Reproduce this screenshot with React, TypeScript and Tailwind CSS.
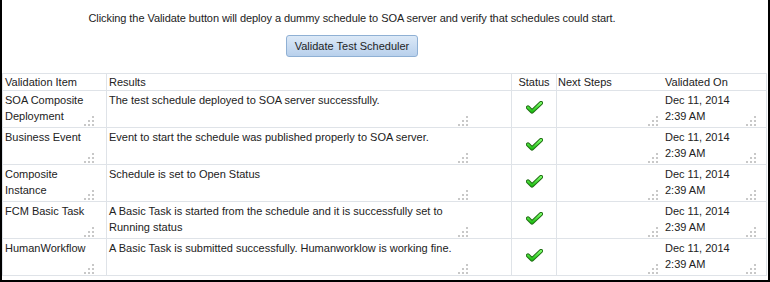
import React from "react";

const Check = () => (
  <svg width="17" height="13" viewBox="0 0 17 13">
    <defs>
      <linearGradient id="cg" x1="0" y1="0" x2="0" y2="1">
        <stop offset="0" stopColor="#7dff6a" />
        <stop offset="1" stopColor="#1fbf14" />
      </linearGradient>
    </defs>
    <path d="M2 6.5 L6 10.5 L15 2" fill="none" stroke="#1e6b12" strokeWidth="4.2" strokeLinecap="round" strokeLinejoin="round" />
    <path d="M2 6.5 L6 10.5 L15 2" fill="none" stroke="url(#cg)" strokeWidth="2.4" strokeLinecap="round" strokeLinejoin="round" />
  </svg>
);

const Grip = () => (
  <svg width="10" height="10" viewBox="0 0 10 10">
    <rect x="8" y="0" width="2" height="2" fill="#c8c8c8" />
    <rect x="4" y="4" width="2" height="2" fill="#c8c8c8" />
    <rect x="8" y="4" width="2" height="2" fill="#c8c8c8" />
    <rect x="0" y="8" width="2" height="2" fill="#c8c8c8" />
    <rect x="4" y="8" width="2" height="2" fill="#c8c8c8" />
    <rect x="8" y="8" width="2" height="2" fill="#c8c8c8" />
  </svg>
);

const rows = [
  { item: "SOA Composite Deployment", result: "The test schedule deployed to SOA server successfully." },
  { item: "Business Event", result: "Event to start the schedule was published properly to SOA server." },
  { item: "Composite Instance", result: "Schedule is set to Open Status" },
  { item: "FCM Basic Task", result: "A Basic Task is started from the schedule and it is successfully set to Running status" },
  { item: "HumanWorkflow", result: "A Basic Task is submitted successfully. Humanworklow is working fine." },
];

export default function App() {
  return (
    <div
      className="w-[770px] h-[282px] bg-white border-l-2 border-r-2 border-b-2 border-black text-[11px] text-[#222] overflow-hidden"
      style={{ fontFamily: '"Liberation Sans", Arial, sans-serif' }}
    >
      <div className="h-[73px] w-[700px] flex flex-col items-center">
        <div className="mt-[11px] leading-[14px] tracking-[-0.07px]">
          Clicking the Validate button will deploy a dummy schedule to SOA server and verify that schedules could start.
        </div>
        <button className="mt-[10px] h-[22px] w-[132px] rounded-[3px] border border-[#8fb0d4] bg-gradient-to-b from-[#dce9f7] to-[#b8d0ec] text-[11px] text-[#1f1f1f] leading-[20px]">
          Validate Test Scheduler
        </button>
      </div>
      <div className="w-[765px] border-l border-[#dfe3e8]">
        <div className="grid grid-cols-[104px_405px_45px_104px_106px] h-[18px] border-t border-b border-[#dfe3e8] leading-[16px]">
          <div className="border-r border-[#dfe3e8] pl-[2px]">Validation Item</div>
          <div className="border-r border-[#dfe3e8] pl-[2px]">Results</div>
          <div className="border-r border-[#dfe3e8] text-center">Status</div>
          <div className="pl-[1px]">Next Steps</div>
          <div className="border-r border-[#dfe3e8] pl-[4px]">Validated On</div>
        </div>
        {rows.map((r, i) => (
          <div key={i} className="grid grid-cols-[104px_405px_45px_104px_106px] h-[37px] border-b border-[#dfe3e8] leading-[16px]">
            <div className="relative border-r border-[#dfe3e8] pl-[2px] pr-[14px] pt-[1px]">
              {r.item}
              <div className="absolute right-[12px] bottom-[1px] flex"><Grip /></div>
            </div>
            <div className="relative border-r border-[#dfe3e8] pl-[2px] pr-[40px] pt-[1px]">
              {r.result}
              <div className="absolute right-[43px] bottom-[1px] flex"><Grip /></div>
            </div>
            <div className="border-r border-[#dfe3e8] flex items-center justify-center pb-[3px] pl-[1px]">
              <Check />
            </div>
            <div className="relative">
              <div className="absolute right-[3px] bottom-[1px] flex"><Grip /></div>
            </div>
            <div className="relative border-r border-[#dfe3e8] pl-[4px] pt-[1px]">
              <div>Dec 11, 2014</div>
              <div>2:39 AM</div>
              <div className="absolute right-[10px] bottom-[1px] flex"><Grip /></div>
            </div>
          </div>
        ))}
      </div>
    </div>
  );
}
